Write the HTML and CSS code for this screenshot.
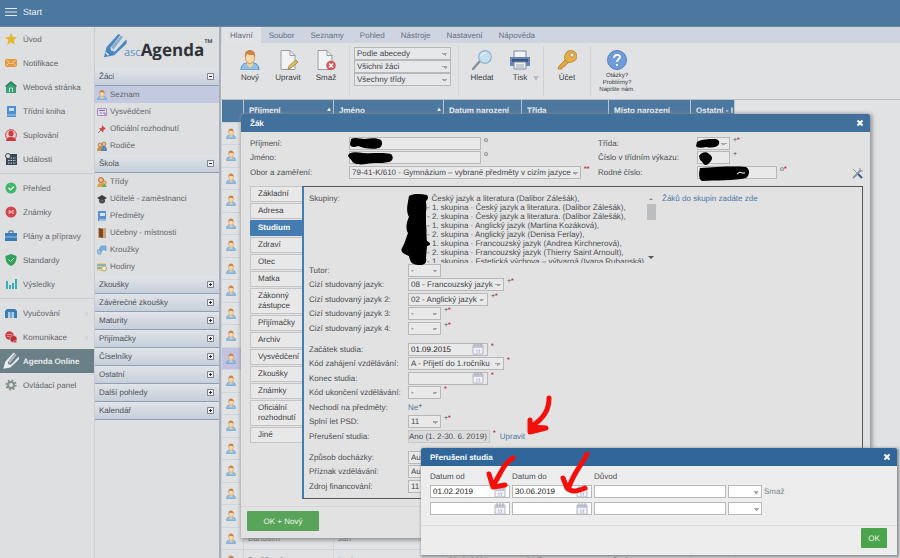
FILE: index.html
```
<!DOCTYPE html>
<html lang="cs">
<head>
    <meta charset="UTF-8">
    <meta name="viewport" content="width=device-width, initial-scale=1.0">
    <title>ascAgenda</title>
    <link rel="stylesheet" href="styles.css">
</head>
<body>
    <!-- Shared icons -->
    <svg class="symbols" width="0" height="0">
        <symbol id="person" viewBox="0 0 20 20">
            <path d="M1 20c0-5 3-7 6-7h6c3 0 6 2 6 7z" fill="#8fc0e8" stroke="#5b8dbb" stroke-width="1"/>
            <path d="M7 12h6v3l-3 3-3-3z" fill="#f3cf9c"/>
            <ellipse cx="10" cy="7.500" rx="4.500" ry="6" fill="#f8d9ab" stroke="#c28a4c" stroke-width=".8"/>
            <path d="M5 8C4 2 7 0 10 0s6 2 5 8l-1-3c-3 0-5 0-7-1z" fill="#c9824a"/>
        </symbol>
        <symbol id="calendar" viewBox="0 0 12 12">
            <path d="M1 2h10v9H1z" fill="#f4f4f6" stroke="#b4b6c2"/>
            <path d="M1 2h10v3H1z" fill="#c3c6d2"/>
            <path d="M3 0v3M6 0v3M9 0v3" stroke="#a2a5b3"/>
            <path d="M4 7h1v3M6 7h2l-1 3" fill="none" stroke="#a9b0d0" stroke-width=".8"/>
        </symbol>
        <symbol id="pencil" viewBox="0 0 28 28">
            <path d="M2 26l3-11L16 3c1-2 3-2 4-1L9 16l1 3 4 1L26 7c1 2 1 4-1 6L13 24z" fill="currentColor"/>
            <path d="M10 15L20 3l3 1L12 18z" fill="currentColor" opacity=".55"/>
            <path d="M4 21l3 3" stroke="#e8edf2" stroke-width="1.500"/>
        </symbol>
        <symbol id="plus" viewBox="0 0 7 7">
            <path d="M.5.500h6v6h-6z" fill="#eef0f3" stroke="#666b75" stroke-width=".8"/>
            <path d="M2 3.500h3M3.500 2v3" stroke="#333"/>
        </symbol>
        <symbol id="minus" viewBox="0 0 7 7">
            <path d="M.5.500h6v6h-6z" fill="#eef0f3" stroke="#666b75" stroke-width=".8"/>
            <path d="M2 3.500h3" stroke="#333"/>
        </symbol>
        <symbol id="close" viewBox="0 0 8 8">
            <path d="M1.500 1.500l5 5M6.500 1.500l-5 5" stroke="#fff" stroke-width="2"/>
        </symbol>
    </svg>

    <header class="topbar">
        <button class="burger" aria-label="Menu"><svg width="12" height="10" viewBox="0 0 12 10"><path d="M0 1.500h12M0 5h12M0 8.500h12" stroke="#e3e9ef" stroke-width="1.200"/></svg></button>
        <span>Start</span>
    </header>

    <div class="page">
        <nav class="sidebar">
            <a href="#"><svg viewBox="0 0 12 12"><path d="M6 0l1.700 4 4.300.3-3.300 2.800L9.800 12 6 9.300 2.200 12l1.100-4.900L0 4.300 4.300 4z" fill="#e3b92f"/></svg>Úvod</a>
            <a href="#"><svg viewBox="0 0 12 12"><path d="M0 2h12v8H0z" fill="#e39a3c"/><path d="M0 2l6 5 6-5M0 10l4-4M12 10L8 6" fill="none" stroke="#f6dcb5" stroke-width=".8"/></svg>Notifikace</a>
            <a href="#"><svg viewBox="0 0 12 12"><path d="M6 1l5 4v7H1V5z" fill="#3c9b78"/><path d="M0 5l6-5 6 5-1 1-5-4-5 4z" fill="#2f8062"/><path d="M4.500 11V7h3v4" fill="none" stroke="#bfe5d3"/></svg>Webová stránka</a>
            <a href="#"><svg viewBox="0 0 12 12"><path d="M2 1h9v11H2z" fill="#4a8fd0"/><path d="M4 3h5v3H4z" fill="#c9dff2"/><path d="M2 10h9" stroke="#a9cbe8"/></svg>Třídní kniha</a>
            <a href="#"><svg viewBox="0 0 12 12"><circle cx="6" cy="6" r="5.400" fill="#e9d3d3" stroke="#d04a4e"/><ellipse cx="6" cy="4.500" rx="2.500" ry="3" fill="#cf3a40"/><path d="M1 12c0-3 2-4 4-4h2c2 0 4 1 4 4z" fill="#cf3a40"/></svg>Suplování</a>
            <a href="#"><svg viewBox="0 0 12 12"><path d="M1 1h11v11H1z" fill="#394654"/><path d="M3 5h8M3 7.500h8M3 10h8" stroke="#cdd3d9" stroke-dasharray="1.500 1"/><circle cx="3" cy="3" r="2.500" fill="#dde1e4" stroke="#394654"/></svg>Události</a>
            <hr>
            <a href="#"><svg viewBox="0 0 12 12"><circle cx="6" cy="6" r="5.500" fill="#3fb868"/><path d="M3.500 6l2 2L9 4.500" fill="none" stroke="#fff" stroke-width="1.200"/></svg>Přehled</a>
            <a href="#"><svg viewBox="0 0 12 12"><circle cx="6" cy="6" r="5.500" fill="#d6454a"/><path d="M4 8l.5-4L6 7l2-3v4" fill="none" stroke="#f4c8ca"/></svg>Známky</a>
            <a href="#"><svg viewBox="0 0 12 12"><path d="M0 3h12v8H0z" fill="#3d7db5"/><path d="M4 3V1h4v2" fill="none" stroke="#2c5f8e"/><path d="M0 7h12" stroke="#9fc2de"/></svg>Plány a přípravy</a>
            <a href="#"><svg viewBox="0 0 12 12"><path d="M6 0l5.500 2c0 5-1 8-5.500 10C1.500 10 .5 7 .5 2z" fill="#33a15c"/><path d="M3.500 5.500l2 2L9 4" fill="none" stroke="#bfe8cd"/></svg>Standardy</a>
            <a href="#"><svg viewBox="0 0 12 12"><path d="M2 11V3M5 11V7M8 11V5M11 11V1" stroke="#39b0b8" stroke-width="2"/></svg>Výsledky</a>
            <hr>
            <a href="#" class="more"><svg viewBox="0 0 12 12"><path d="M0 4l2-2h8l2 2v7H0z" fill="#3d7db5"/><path d="M3 5h2.500v6H3zM6.500 5H9v6H6.500z" fill="#b3cfe6"/></svg>Vyučování</a>
            <a href="#" class="more"><svg viewBox="0 0 12 12"><circle cx="4.500" cy="4.500" r="4.200" fill="#cc3e43"/><circle cx="8.500" cy="8" r="3.500" fill="#b92d33" stroke="#e3c9ca" stroke-width=".6"/><path d="M11 9l1 3-4-1zM2 3.500h5M2 5.500h3" stroke="#f0c4c6" stroke-width=".6" fill="#b92d33"/></svg>Komunikace</a>
            <a href="#" class="current"><svg><use href="#pencil"/></svg>Agenda Online</a>
            <a href="#"><svg viewBox="0 0 12 12"><circle cx="6" cy="6" r="4.600" fill="none" stroke="#849089" stroke-width="2" stroke-dasharray="1.800 1.800"/><circle cx="6" cy="6" r="3" fill="none" stroke="#849089" stroke-width="2"/></svg>Ovládací panel</a>
        </nav>

        <aside class="menu">
            <div class="logo">
                <svg><use href="#pencil"/></svg>
                <span class="asc">asc</span><span class="agenda">Agenda</span><span class="tm">™</span>
            </div>
            <button class="menu-head">Žáci<svg><use href="#minus"/></svg></button>
            <div class="menu-items">
                <a href="#" class="selected"><svg><use href="#person"/></svg>Seznam</a>
                <a href="#"><svg viewBox="0 0 10 10"><path d="M.5 1.500h9v7h-9z" fill="#e6dcf0" stroke="#a98fc0"/><path d="M2 3.500h6M3 6h2M6 6h2v2" stroke="#8a6aa8" fill="none"/></svg>Vysvědčení</a>
                <a href="#"><svg viewBox="0 0 10 10"><path d="M5 1l4 4-2 .5-1 3-4-4 3-1z" fill="#d4484c"/><path d="M4 6L1 9" stroke="#888"/></svg>Oficiální rozhodnutí</a>
                <a href="#"><svg viewBox="0 0 10 10"><path d="M0 10c0-3 1-4 3-4s3 1 3 4z" fill="#c59a3d"/><path d="M4 10c0-4 1-5 3-5s3 2 3 5z" fill="#5b85b3"/><circle cx="3" cy="4" r="2" fill="#eabf8a" stroke="#8d5f33" stroke-width=".6"/><circle cx="7" cy="3" r="2" fill="#eabf8a" stroke="#8d5f33" stroke-width=".6"/></svg>Rodiče</a>
            </div>
            <button class="menu-head">Škola<svg><use href="#minus"/></svg></button>
            <div class="menu-items">
                <a href="#"><svg viewBox="0 0 10 10"><path d="M0 10c0-3 2-4 4-4s3 1 3 4z" fill="#d9a83e"/><path d="M5 10c0-2 1-3 3-3l2 3z" fill="#69a86a"/><circle cx="4" cy="3" r="2.500" fill="#eabf8a" stroke="#b9692f"/><circle cx="7.500" cy="5.500" r="1.700" fill="#eabf8a" stroke="#b9692f" stroke-width=".6"/></svg>Třídy</a>
                <a href="#"><svg viewBox="0 0 10 10"><path d="M0 4l5-3 5 3-5 3z" fill="#3d4147"/><path d="M2 5v3c2 2 4 2 6 0V5L5 7z" fill="#4d525a"/></svg>Učitelé - zaměstnanci</a>
                <a href="#"><svg viewBox="0 0 10 10"><path d="M1 0h8v10H1z" fill="#5d8fd0"/><path d="M3 2h5v3H3z" fill="#d5e3f4"/><path d="M2 9h7" stroke="#dfe7f2"/></svg>Předměty</a>
                <a href="#"><svg viewBox="0 0 10 10"><path d="M1 0h8v10H1z" fill="#caa27c"/><path d="M2 0l4 1v9l-4-1z" fill="#7c4a26"/></svg>Učebny - místnosti</a>
                <a href="#"><svg viewBox="0 0 10 10"><path d="M4 1h5v5L7 4 4 7 2 5z" fill="#80b0de" stroke="#5d8fc4" stroke-width=".6"/><path d="M0 5h4v4H1z" fill="#a4c6e6" stroke="#5d8fc4" stroke-width=".6"/></svg>Kroužky</a>
                <a href="#"><svg viewBox="0 0 10 10"><path d="M0 1h9v8H0z" fill="#e5cf83"/><path d="M0 3h9M0 6h5" stroke="#70a7c9" stroke-width="1.500"/><circle cx="7" cy="6.500" r="2.500" fill="#f2ead0" stroke="#a58b4c" stroke-width=".7"/></svg>Hodiny</a>
            </div>
            <button class="menu-head">Zkoušky<svg><use href="#plus"/></svg></button>
            <button class="menu-head">Závěrečné zkoušky<svg><use href="#plus"/></svg></button>
            <button class="menu-head">Maturity<svg><use href="#plus"/></svg></button>
            <button class="menu-head">Přijímačky<svg><use href="#plus"/></svg></button>
            <button class="menu-head">Číselníky<svg><use href="#plus"/></svg></button>
            <button class="menu-head">Ostatní<svg><use href="#plus"/></svg></button>
            <button class="menu-head">Další pohledy<svg><use href="#plus"/></svg></button>
            <button class="menu-head">Kalendář<svg><use href="#plus"/></svg></button>
        </aside>

        <main class="main">
            <div class="ribbon-tabs">
                <button class="active">Hlavní</button>
                <button>Soubor</button>
                <button>Seznamy</button>
                <button>Pohled</button>
                <button>Nástroje</button>
                <button>Nastavení</button>
                <button>Nápověda</button>
            </div>
            <div class="toolbar">
                <div class="tool-group">
                    <button class="tool"><svg><use href="#person"/></svg>Nový</button>
                    <button class="tool"><svg viewBox="0 0 20 20"><path d="M3 .5h9l5 5v14H3z" fill="#f2f3f4" stroke="#9a9ea3"/><path d="M12 .5v5h5" fill="none" stroke="#9a9ea3"/><path d="M10 19l1-3 7-6 2 2-7 6z" fill="#e5bd5a" stroke="#8f7434" stroke-width=".7"/></svg>Upravit</button>
                    <button class="tool"><svg viewBox="0 0 20 20"><path d="M2 .5h9l5 5v14H2z" fill="#f2f3f4" stroke="#9a9ea3"/><path d="M11 .5v5h5" fill="none" stroke="#9a9ea3"/><circle cx="15" cy="15.500" r="4.500" fill="#d9595c" stroke="#b94649" stroke-width=".5"/><path d="M13 13.500l4 4M17 13.500l-4 4" stroke="#fff" stroke-width="1.400"/></svg>Smaž</button>
                </div>
                <div class="tool-group filters">
                    <select aria-label="Řazení"><option>Podle abecedy</option></select>
                    <select aria-label="Žáci"><option>Všichni žáci</option></select>
                    <select aria-label="Třídy"><option>Všechny třídy</option></select>
                </div>
                <div class="tool-group">
                    <button class="tool"><svg viewBox="0 0 20 20"><path d="M1 19l7-8" stroke="#8b9298" stroke-width="2.500" stroke-linecap="round"/><circle cx="13" cy="7" r="6.300" fill="#c3dff0" stroke="#8fb3cb" stroke-width="1.200"/><path d="M9 6c1-3 4-3 5-2" stroke="#fff" fill="none"/></svg>Hledat</button>
                    <button class="tool drop"><svg viewBox="0 0 20 20"><path d="M4 1h12v7H4z" fill="#f3f4f6" stroke="#7d8da5"/><path d="M0 7h20v9H0z" fill="#6586b8"/><path d="M2 9h16v3H2z" fill="#3e5580"/><path d="M4 12h12v7H4z" fill="#eef0f3" stroke="#7d8da5"/><path d="M6 15h8M6 17h8" stroke="#9aa5b5"/></svg>Tisk</button>
                </div>
                <div class="tool-group">
                    <button class="tool"><svg viewBox="0 0 20 20"><path d="M2 16l7-7 3 3-5 5H5v2H1z" fill="#dfa63e" stroke="#a97a2a" stroke-width=".7"/><path d="M9 3c2-3 6-3 9-1 3 3 2 8-1 9-3 2-6 2-8 0-2-2-2-5 0-8z" fill="#e3ad49" stroke="#a97a2a" stroke-width=".7"/><circle cx="15" cy="5" r="2" fill="#e4e5e6" stroke="#a97a2a" stroke-width=".6"/></svg>Účet</button>
                </div>
                <div class="tool-group">
                    <button class="tool help"><svg viewBox="0 0 20 20"><circle cx="10" cy="10" r="9.500" fill="#6f9bdb" stroke="#5680bd"/><path d="M7 8c0-4 6-4 6-1 0 2-3 2-3 5M10 14v2" fill="none" stroke="#fff" stroke-width="1.800"/></svg><span>Otázky?<br>Problémy?<br>Napište nám.</span></button>
                </div>
            </div>

            <table class="students">
                <thead>
                    <tr>
                        <th class="c-icon"></th>
                        <th class="c-surname sorted">Příjmení</th>
                        <th class="c-name sorted">Jméno</th>
                        <th class="c-birth">Datum narození</th>
                        <th class="c-class">Třída</th>
                        <th class="c-place">Místo narození</th>
                        <th class="c-other">Ostatní - I</th>
                    </tr>
                </thead>
                <tbody>
                    <tr><td><svg><use href="#person"/></svg></td><td></td><td></td><td></td><td></td><td></td><td></td></tr>
                    <tr><td><svg><use href="#person"/></svg></td><td></td><td></td><td></td><td></td><td></td><td></td></tr>
                    <tr><td><svg><use href="#person"/></svg></td><td></td><td></td><td></td><td></td><td></td><td></td></tr>
                    <tr><td><svg><use href="#person"/></svg></td><td></td><td></td><td></td><td></td><td></td><td></td></tr>
                    <tr><td><svg><use href="#person"/></svg></td><td></td><td></td><td></td><td></td><td></td><td></td></tr>
                    <tr><td><svg><use href="#person"/></svg></td><td></td><td></td><td></td><td></td><td></td><td></td></tr>
                    <tr><td><svg><use href="#person"/></svg></td><td></td><td></td><td></td><td></td><td></td><td></td></tr>
                    <tr><td><svg><use href="#person"/></svg></td><td></td><td></td><td></td><td></td><td></td><td></td></tr>
                    <tr><td><svg><use href="#person"/></svg></td><td></td><td></td><td></td><td></td><td></td><td></td></tr>
                    <tr><td><svg><use href="#person"/></svg></td><td></td><td></td><td></td><td></td><td></td><td></td></tr>
                    <tr class="picked"><td><svg><use href="#person"/></svg></td><td></td><td></td><td></td><td></td><td></td><td></td></tr>
                    <tr><td><svg><use href="#person"/></svg></td><td></td><td></td><td></td><td></td><td></td><td></td></tr>
                    <tr><td><svg><use href="#person"/></svg></td><td></td><td></td><td></td><td></td><td></td><td></td></tr>
                    <tr><td><svg><use href="#person"/></svg></td><td></td><td></td><td></td><td></td><td></td><td></td></tr>
                    <tr><td><svg><use href="#person"/></svg></td><td></td><td></td><td></td><td></td><td></td><td></td></tr>
                    <tr><td><svg><use href="#person"/></svg></td><td></td><td></td><td></td><td></td><td></td><td></td></tr>
                    <tr><td><svg><use href="#person"/></svg></td><td></td><td></td><td></td><td></td><td></td><td></td></tr>
                    <tr><td><svg><use href="#person"/></svg></td><td></td><td></td><td></td><td></td><td></td><td></td></tr>
                    <tr><td><svg><use href="#person"/></svg></td><td>Bartoším</td><td>Jan</td><td></td><td></td><td></td><td></td></tr>
                    <tr><td><svg><use href="#person"/></svg></td><td>Brožíková</td><td>Lucie</td><td>29. 6. 2001</td><td>2.V7</td><td>Praha</td><td></td></tr>
                </tbody>
            </table>
        </main>
    </div>

    <!-- Student window -->
    <section class="window student-window">
        <header class="window-head">Žák<button aria-label="Zavřít"><svg><use href="#close"/></svg></button></header>
        <div class="student-top">
            <div class="fields main-fields">
                <label for="surname">Příjmení:</label>
                <div><input id="surname" class="w-name"><sup>o</sup></div>
                <label for="name">Jméno:</label>
                <div><input id="name" class="w-name"><sup>o</sup></div>
                <label for="branch">Obor a zaměření:</label>
                <div><select id="branch" class="w-branch"><option>79-41-K/610 - Gymnázium – vybrané předměty v cizím jazyce</option></select><sup><b>**</b></sup></div>
            </div>
            <div class="fields class-fields">
                <label for="class">Třída:</label>
                <div><select id="class" class="w-short"><option></option></select><sup>+<b>*</b></sup></div>
                <label for="number">Číslo v třídním výkazu:</label>
                <div><input id="number" class="w-short"><sup>+</sup></div>
                <label for="birth">Rodné číslo:</label>
                <div><input id="birth" class="w-date"><sup>o<b>*</b></sup></div>
            </div>
            <button class="settings" aria-label="Nastavení"><svg viewBox="0 0 11 11"><path d="M1 10l8-8" stroke="#8e949c" stroke-width="1.800"/><path d="M8 0v3h3" stroke="#8e949c" fill="none"/><path d="M1 1l5 5" stroke="#8e949c"/><path d="M6 6l4 4" stroke="#3f5c8d" stroke-width="2.200"/></svg></button>
        </div>
        <div class="student-body">
            <div class="side-tabs">
                <button>Základní</button>
                <button>Adresa</button>
                <button class="active">Studium</button>
                <button>Zdraví</button>
                <button>Otec</button>
                <button>Matka</button>
                <button>Zákonný zástupce</button>
                <button>Přijímačky</button>
                <button>Archiv</button>
                <button>Vysvědčení</button>
                <button>Zkoušky</button>
                <button>Známky</button>
                <button>Oficiální rozhodnutí</button>
                <button>Jiné</button>
            </div>
            <div class="panel">
                <div class="groups">
                    <span>Skupiny:</span>
                    <div class="group-box">
                        <ul>
                            <li>&nbsp; Český jazyk a literatura (Dalibor Zálešák),</li>
                            <li>- 1. skupina · Český jazyk a literatura. (Dalibor Zálešák),</li>
                            <li>- 2. skupina · Český jazyk a literatura. (Dalibor Zálešák),</li>
                            <li>- 1. skupina · Anglický jazyk (Martina Kozáková),</li>
                            <li>- 2. skupina · Anglický jazyk (Denisa Ferlay),</li>
                            <li>- 1. skupina · Francouzský jazyk (Andrea Kirchnerová),</li>
                            <li>- 2. skupina · Francouzský jazyk (Thierry Saint Arnoult),</li>
                            <li>- 1. skupina · Estetická výchova – výtvarná (Ivana Rubanská),</li>
                        </ul>
                        <div class="scroll"><i class="up"></i><i class="thumb"></i><i class="down"></i></div>
                    </div>
                    <a href="#">Žáků do skupin zadáte zde</a>
                </div>
                <div class="fields">
                    <label for="tutor">Tutor:</label>
                    <div><select id="tutor" class="w-short"><option>-</option></select></div>
                    <label for="lang1">Cizí studovaný jazyk:</label>
                    <div><select id="lang1" class="w-lang1"><option>08 - Francouzský jazyk</option></select><sup>+<b>*</b></sup></div>
                    <label for="lang2">Cizí studovaný jazyk 2:</label>
                    <div><select id="lang2" class="w-date"><option>02 - Anglický jazyk</option></select><sup>+<b>*</b></sup></div>
                    <label for="lang3">Cizí studovaný jazyk 3:</label>
                    <div><select id="lang3" class="w-short"><option>-</option></select><sup>+<b>*</b></sup></div>
                    <label for="lang4">Cizí studovaný jazyk 4:</label>
                    <div><select id="lang4" class="w-short"><option>-</option></select><sup>+<b>*</b></sup></div>
                </div>
                <div class="fields">
                    <label for="start">Začátek studia:</label>
                    <div><span class="date"><input id="start" value="01.09.2015"><svg><use href="#calendar"/></svg></span><sup><b>*</b></sup></div>
                    <label for="startcode">Kód zahájení vzdělávání:</label>
                    <div><select id="startcode" class="w-lang1"><option>A - Přijetí do 1.ročníku</option></select><sup><b>*</b></sup></div>
                    <label for="end">Konec studia:</label>
                    <div><span class="date"><input id="end"><svg><use href="#calendar"/></svg></span><sup><b>*</b></sup></div>
                    <label for="endcode">Kód ukončení vzdělávání:</label>
                    <div><select id="endcode" class="w-short"><option>-</option></select><sup><b>*</b></sup></div>
                    <span>Nechodí na předměty:</span>
                    <div class="plain"><a href="#">Ne</a><sup>+</sup></div>
                    <label for="psd">Splní let PSD:</label>
                    <div><select id="psd" class="w-short"><option>11</option></select><sup>+<b>*</b></sup></div>
                    <label for="break">Přerušení studia:</label>
                    <div><input id="break" class="w-break" value="Ano (1. 2-30. 6. 2019)" readonly><sup><b>*</b></sup><a href="#" class="edit">Upravit</a></div>
                </div>
                <div class="fields">
                    <label for="attendance">Způsob docházky:</label>
                    <div><select id="attendance" class="w-date"><option>Automaticky</option></select></div>
                    <label for="flag">Příznak vzdělávání:</label>
                    <div><select id="flag" class="w-date"><option>Automaticky</option></select></div>
                    <label for="funding">Zdroj financování:</label>
                    <div><select id="funding" class="w-date"><option>11</option></select></div>
                </div>
            </div>
        </div>
        <footer class="student-foot"><button class="green">OK + Nový</button></footer>
    </section>

    <!-- Study break window -->
    <section class="window break-window">
        <header class="window-head">Přerušení studia<button aria-label="Zavřít"><svg><use href="#close"/></svg></button></header>
        <div class="break-grid">
            <span>Datum od</span><span>Datum do</span><span>Důvod</span><span></span><span></span>
            <span class="date"><input aria-label="Datum od" value="01.02.2019"><svg><use href="#calendar"/></svg></span>
            <span class="date"><input aria-label="Datum do" value="30.06.2019"><svg><use href="#calendar"/></svg></span>
            <input aria-label="Důvod">
            <select aria-label="Typ"><option></option></select>
            <button class="delete">Smaž</button>
            <span class="date"><input aria-label="Datum od"><svg><use href="#calendar"/></svg></span>
            <span class="date"><input aria-label="Datum do"><svg><use href="#calendar"/></svg></span>
            <input aria-label="Důvod">
            <select aria-label="Typ"><option></option></select>
        </div>
        <footer class="break-foot"><button class="green">OK</button></footer>
    </section>

    <!-- Hand-drawn marks: hidden names and arrows -->
    <svg class="marks" width="900" height="558" viewBox="0 0 900 558">
        <g fill="#000">
            <path d="M351 139c4-2 9 0 14 0 6-1 13-1 16 1 2 3 1 7-2 8-8 2-16 0-21-2-4 2-8 1-8-2z"/>
            <path d="M348 156c1-5 9-4 15-3 9 1 18-1 28 1 3 3 2 7-2 8-9 2-17 0-23 2-7 1-13 0-14-3z"/>
            <path d="M697 142c5-3 11-3 17-3 4 0 6 2 5 5-2 4-8 4-13 3-4 1-9 1-10-1z"/>
            <path d="M699 156c2-4 8-5 10-2 3 2 4 4 2 7-2 2-3 4-6 4-2-1-3-4-5-5z"/>
            <path d="M700 168c15-1 33-2 46-1 4 2 4 8 0 11-12 3-30 2-44 3-4-2-3-9-2-13z"/>
            <path d="M409 196c5-3 12-2 18-1 2 3 1 4-1 6 0 3 1 6 0 11v12c1 7 0 10 1 17 4 2 4 4 0 5l-1 12c1 4-1 7-6 7-7 0-10-2-11-9-5-2-9-4-7-8 3-5 4-10 6-15-3-5-1-12 1-16-3-6-2-10 0-21z"/>
        </g>
        <path d="M737 174l3-2 2 1h3" fill="none" stroke="#fff"/>
        <g fill="none" stroke="#f3100c" stroke-width="5" stroke-linecap="round" stroke-linejoin="round">
            <path d="M549 398c0 12-5 20-17 28M530 420l0 12 16-4-13-1"/>
            <path d="M513 458c-9 5-12 15-19 26M489 474l4 13 12-2"/>
            <path d="M587 454c-6 12-13 18-18 33M563 478l4 10c5 5 11 3 18 0"/>
        </g>
    </svg>
</body>
</html>
```
FILE: styles.css
```
* {
    box-sizing: border-box;
}

body {
    margin: 0;
    height: 100vh;
    overflow: hidden;
    display: flex;
    flex-direction: column;
    position: relative;
    background-color: #e1e2e3;
    color: #4b4e52;
    font-family: "Liberation Sans", Arial, sans-serif;
    font-size: 8px;
    line-height: 9px;
    text-rendering: geometricPrecision;
}

button, input, select {
    font: inherit;
    color: inherit;
    margin: 0;
    text-rendering: inherit;
}

button {
    border: none;
    background: none;
    padding: 0;
    cursor: pointer;
}

a {
    color: #4f76a8;
    text-decoration: none;
}

.symbols {
    position: absolute;
}

/* Top bar */
.topbar {
    display: flex;
    align-items: center;
    gap: 6px;
    height: 27px;
    flex: none;
    padding: 0 5px 2px;
    background-color: #4c779f;
    border-bottom: 1px solid #6c86a0;
    color: #eef2f6;
    font-size: 9px;
}

.burger {
    display: flex;
}

.page {
    flex: 1;
    min-height: 0;
    display: flex;
}

/* Left sidebar */
.sidebar {
    width: 95px;
    flex: none;
    background-color: #dddfe1;
    border-right: 1px solid #c9ccd0;
}

.sidebar a {
    display: flex;
    align-items: center;
    gap: 6px;
    height: 24px;
    padding-left: 5px;
    color: #626568;
    white-space: nowrap;
}

.sidebar svg {
    width: 12px;
    height: 12px;
    flex: none;
}

.sidebar hr {
    margin: 2px 0;
    border: none;
    border-top: 1px solid #caccd0;
}

.sidebar .more::after {
    content: "›";
    margin: 0 6px 0 auto;
    color: #c0c3c7;
}

.sidebar .current {
    background-color: #6a7f86;
    color: #e9edef;
    font-weight: bold;
    padding-left: 2px;
    gap: 3px;
}

.sidebar .current svg {
    width: 18px;
    height: 18px;
}

/* Agenda menu */
.menu {
    width: 126px;
    flex: none;
    background-color: #dddfe1;
    border-right: 2px solid #a9b0ba;
}

.logo {
    display: flex;
    align-items: center;
    height: 41px;
    padding-left: 7px;
}

.logo svg {
    width: 26px;
    height: 26px;
    margin-bottom: 4px;
    flex: none;
    color: #4b87c0;
}

.logo span {
    font-family: "Open Sans", sans-serif;
}

.asc {
    margin: 9px 0 0 -4px;
    color: #5b93c6;
    font-size: 11px;
}

.agenda {
    margin-top: 3px;
    color: #2f3236;
    font-size: 17px;
    font-weight: bold;
}

.tm {
    margin-bottom: 8px;
    color: #2f3236;
    font-size: 11px;
    font-weight: bold;
}

.menu-head {
    display: flex;
    align-items: center;
    justify-content: space-between;
    width: 100%;
    height: 18px;
    padding: 0 5px 0 4px;
    background: linear-gradient(#e1e4e8, #c7cfdb);
    border-bottom: 1px solid #8fa0b5;
    color: #4c5057;
}

.menu-head svg {
    width: 7px;
    height: 7px;
}

.menu-items {
    padding-bottom: 1px;
}

.menu-items a {
    display: flex;
    align-items: center;
    gap: 3px;
    height: 17px;
    padding-left: 2px;
    color: #626568;
}

.menu-items .selected {
    background-color: #c3c9df;
}

.menu-items svg {
    width: 10px;
    height: 10px;
}

/* Ribbon */
.main {
    flex: 1;
    min-width: 0;
    overflow: hidden;
}

.ribbon-tabs {
    display: flex;
    height: 16px;
    padding-left: 1px;
    background-color: #ced5e1;
}

.ribbon-tabs button {
    padding: 0 8px;
    color: #646e7f;
}

.ribbon-tabs .active {
    background-color: #e1e3e6;
}

.toolbar {
    display: flex;
    height: 57px;
    padding-top: 3px;
    background-color: #e1e2e4;
    border-bottom: 1px solid #b9bcc0;
}

.tool-group {
    display: flex;
    height: 50px;
    padding: 0 4px;
    border-right: 1px solid #d0d2d5;
}

.tool-group:first-child {
    padding-left: 10px;
}

.tool-group:last-child {
    border-right: none;
}

.tool {
    display: flex;
    flex-direction: column;
    align-items: center;
    gap: 3px;
    width: 38px;
    padding-top: 4px;
    color: #3a3d40;
}

.tool svg {
    width: 20px;
    height: 20px;
    flex: none;
}

.drop {
    position: relative;
}

.drop::after {
    content: "";
    position: absolute;
    right: 0;
    top: 30px;
    border: 3px solid transparent;
    border-top: 5px solid #b9bbbe;
}

.help {
    width: 44px;
    font-size: 6px;
    line-height: 7px;
}

.filters {
    flex-direction: column;
    width: 109px;
    padding: 1px 7px 0 4px;
}

.filters select {
    height: 13px;
    background-color: #e6e7e8;
}

/* Student list */
.students {
    table-layout: fixed;
    border-collapse: collapse;
    width: 513px;
}

.students th {
    height: 22px;
    padding: 0 0 0 5px;
    background-color: #4c779f;
    border-right: 1px solid #b5c4d3;
    color: #eef2f6;
    text-align: left;
    white-space: nowrap;
    overflow: hidden;
}

.sorted::after {
    content: "▲";
    float: right;
    margin-right: 1px;
    font-size: 6px;
}

.c-icon { width: 22px; }
.c-surname { width: 90px; }
.c-name { width: 110px; }
.c-birth { width: 78px; }
.c-class { width: 87px; }
.c-place { width: 82px; }
.c-other { width: 44px; }

.students td {
    height: 22px;
    padding: 0 0 0 4px;
    border: 1px solid #cdd4de;
}

.students tr:nth-child(even) td {
    height: 23px;
}

.students svg {
    display: block;
    width: 10px;
    height: 11px;
}

.picked {
    background-color: #c3c2e0;
}

/* Form controls */
input, select {
    height: 13px;
    padding: 0 2px;
    background-color: #e9e9e9;
    border: 1px solid #b7b8ba;
    border-radius: 0;
    outline: none;
}

select {
    appearance: none;
    color: #424549;
    background-image: linear-gradient(45deg, transparent 50%, #a4a6a9 50%), linear-gradient(-45deg, transparent 50%, #a4a6a9 50%);
    background-size: 3px 3px;
    background-position: right 5px top 5px, right 2px top 5px;
    background-repeat: no-repeat;
}

.w-short { width: 33px; }
.w-date { width: 80px; }
.w-break { width: 82px; }
.w-lang1 { width: 96px; }
.w-name { width: 132px; }
.w-branch { width: 232px; }

.w-break {
    background-color: #dcdcdc;
    border-color: #c8c8c8;
    padding: 0;
    color: #4b4e52;
}

sup {
    align-self: flex-start;
    margin-left: 3px;
    font-size: 7px;
    line-height: 7px;
}

sup b {
    color: #c0304a;
}

.date {
    display: flex;
    align-items: center;
    width: 80px;
    height: 13px;
    padding-right: 3px;
    border: 1px solid #b7b8ba;
    background-color: #e9e9e9;
}

.date input {
    flex: 1;
    min-width: 0;
    height: 11px;
    border: none;
    background: none;
    color: #222;
}

.date svg {
    width: 12px;
    height: 12px;
    flex: none;
}

.green {
    background-color: #58a55a;
    border-radius: 1px;
    color: #f0f6f0;
}

/* Windows */
.window {
    position: absolute;
    display: flex;
    flex-direction: column;
    border-radius: 2px 2px 0 0;
}

.window-head {
    display: flex;
    align-items: center;
    justify-content: space-between;
    height: 18px;
    flex: none;
    padding: 0 6px 0 9px;
    border-radius: 2px 2px 0 0;
    color: #fff;
    font-weight: bold;
}

.window-head svg {
    display: block;
    width: 8px;
    height: 8px;
}

.student-window {
    top: 114px;
    left: 241px;
    right: 30px;
    background-color: #e2e2e2;
    box-shadow: 1px 1px 4px 1px #8a8c8e;
}

.student-window .window-head {
    background-color: #42709c;
}

.student-top {
    display: flex;
    padding: 4px 7px 7px 9px;
}

.fields {
    display: grid;
    grid-template-columns: 99px 1fr;
    grid-auto-rows: 14px 15px;
    align-items: center;
}

.fields > div {
    display: flex;
    align-items: center;
}

.main-fields {
    width: 348px;
}

.class-fields {
    flex: 1;
}

.settings {
    align-self: flex-end;
}

.settings svg {
    display: block;
    width: 11px;
    height: 11px;
}

.student-body {
    display: flex;
    padding: 0 7px 0 9px;
}

.side-tabs {
    display: flex;
    flex-direction: column;
    gap: 1px;
    width: 52px;
    flex: none;
}

.side-tabs button {
    flex: none;
    padding: 2px 0 2px 7px;
    background-color: #e8e8e8;
    border: 1px solid #c4c5c6;
    border-right: none;
    color: #3d4043;
    text-align: left;
    line-height: 10px;
}

.side-tabs .active {
    background-color: #447cb0;
    border-color: #447cb0;
    color: #fff;
    font-weight: bold;
}

.panel {
    flex: 1;
    padding: 7px 0 5px 5px;
    border: 1px solid #55575a;
    border-left: 2px solid #447cb0;
}

.panel .fields + .fields {
    margin-top: 7px;
}

.groups {
    display: grid;
    grid-template-columns: 99px 248px 1fr;
}

.groups > a {
    padding-left: 6px;
}

.group-box {
    display: flex;
    height: 69px;
    overflow: hidden;
}

.group-box ul {
    flex: 1;
    margin: 0;
    padding: 0 0 0 19px;
    list-style: none;
    white-space: nowrap;
}

.scroll {
    display: flex;
    flex-direction: column;
    align-items: center;
    width: 11px;
    padding: 2px 0 4px;
}

.up {
    border: 2px solid transparent;
    border-bottom-color: #8d8f92;
}

.thumb {
    width: 9px;
    height: 16px;
    margin-top: 4px;
    background-color: #bcbdbf;
}

.down {
    margin-top: auto;
    border: 3px solid transparent;
    border-top-color: #55575a;
    border-bottom: none;
}

.plain sup {
    margin-left: 0;
}

.edit {
    margin-left: 4px;
}

.student-foot {
    margin-top: 7px;
    padding: 4px 6px 7px;
    border-top: 1px solid #d6d6d6;
}

.student-foot .green {
    width: 72px;
    height: 20px;
}

.break-window {
    top: 448px;
    left: 421px;
    right: 3px;
    background-color: #ededed;
    box-shadow: 1px 1px 3px 1px #8a8c8e;
}

.break-window .window-head {
    background-color: #30669a;
}

.break-grid {
    display: grid;
    grid-template-columns: 80px 80px 132px 34px 1fr;
    gap: 4px 2px;
    align-items: center;
    padding: 6px 9px 10px;
}

.break-grid input, .break-grid select, .break-grid .date {
    background-color: #fff;
}

.delete {
    justify-self: start;
    color: #7b7d80;
}

.break-foot {
    display: flex;
    justify-content: flex-end;
    padding: 2px 10px 7px;
    border-top: 1px solid #d9d9d9;
}

.break-foot .green {
    width: 26px;
    height: 20px;
    background-color: #4aa44b;
}

/* Drawn over everything */
.marks {
    position: absolute;
    top: 0;
    left: 0;
    pointer-events: none;
}
```
